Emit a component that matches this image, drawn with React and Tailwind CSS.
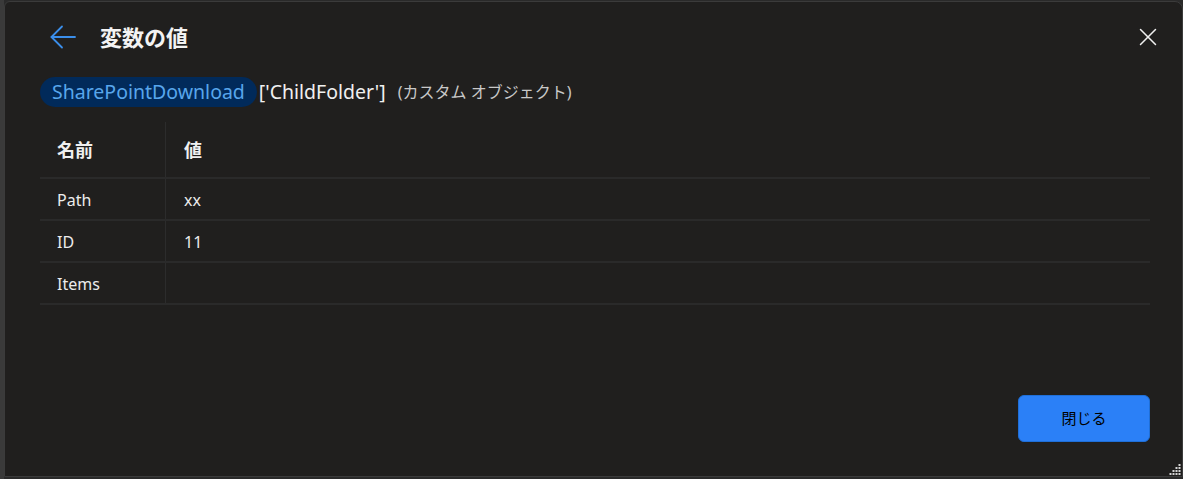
import { X } from "lucide-react";

const rows = [
  { name: "Path", value: "xx" },
  { name: "ID", value: "11" },
  { name: "Items", value: "" },
];

function Grip() {
  const dots = [
    [8, 0], [8, 3], [5, 3], [8, 6], [5, 6], [2, 6], [8, 9], [5, 9], [2, 9], [-1, 9],
  ];
  return (
    <svg width="14" height="12" viewBox="-2 0 13 12" className="absolute right-0 bottom-0">
      {dots.map(([x, y], i) => (
        <rect key={i} x={x} y={y} width="2" height="2" fill="#d4d4d4" />
      ))}
    </svg>
  );
}

function BackArrow() {
  return (
    <svg width="26" height="24" viewBox="0 0 26 24" fill="none" stroke="#3b8eea" strokeWidth="1.8" strokeLinecap="round" strokeLinejoin="round">
      <path d="M25 12H1.5" />
      <path d="M12 1.5 1.5 12 12 22.5" />
    </svg>
  );
}

export default function App() {
  return (
    <div
      className="w-[1183px] h-[479px] bg-[#2a2a2a] flex"
      style={{ fontFamily: '"Noto Sans", "Noto Sans CJK JP", sans-serif' }}
    >
      <div className="w-[4px] bg-[#3a3a3a]" />
      <div className="relative flex-1 mt-[1px] mb-[2px] bg-[#201f1e] border border-[#3b3b3b] rounded-tr-lg rounded-tl-md flex flex-col">
        <div className="flex items-center h-[70px] pl-[45px] pr-[19px]">
          <BackArrow />
          <h1 className="ml-[24px] text-[22px] font-bold text-[#f3f3f3] leading-none">変数の値</h1>
          <X size={30} strokeWidth={1.2} className="ml-auto text-[#f0f0f0]" />
        </div>
        <div className="flex items-center pl-[35px] h-[38px] mt-[1px]">
          <span className="bg-[#012a5a] text-[#58a6ec] text-[19.5px] rounded-full px-[12px] h-[30px] flex items-center">
            SharePointDownload
          </span>
          <span className="ml-[2px] text-[19.5px] text-[#f0f0f0]">['ChildFolder']</span>
          <span className="ml-[12px] text-[16px] text-[#c8c8c8]">(カスタム オブジェクト)</span>
        </div>
        <div className="ml-[35px] mr-[32px] mt-[11px]">
          <div className="flex h-[57px] border-b-2 border-[#2a2a2a]">
            <div className="w-[126px] border-r border-[#2c2c2c] pl-[17px] pt-[2px] flex items-center text-[18px] font-bold text-[#f0f0f0]">
              名前
            </div>
            <div className="pl-[18px] pt-[2px] flex items-center text-[18px] font-bold text-[#f0f0f0]">値</div>
          </div>
          {rows.map((r) => (
            <div key={r.name} className="flex h-[42px] border-b-2 border-[#2a2a2a] text-[16px] text-[#ececec]">
              <div className="w-[126px] border-r border-[#2c2c2c] pl-[17px] pt-[2px] flex items-center">{r.name}</div>
              <div className="pl-[18px] pt-[2px] flex items-center">{r.value}</div>
            </div>
          ))}
        </div>
        <div className="mt-auto mb-[34px] flex justify-end pr-[32px]">
          <button className="w-[132px] h-[47px] rounded-md bg-[#2b80f7] border border-[#1f6fd8] text-[15px] text-black">
            閉じる
          </button>
        </div>
        <Grip />
      </div>
    </div>
  );
}
